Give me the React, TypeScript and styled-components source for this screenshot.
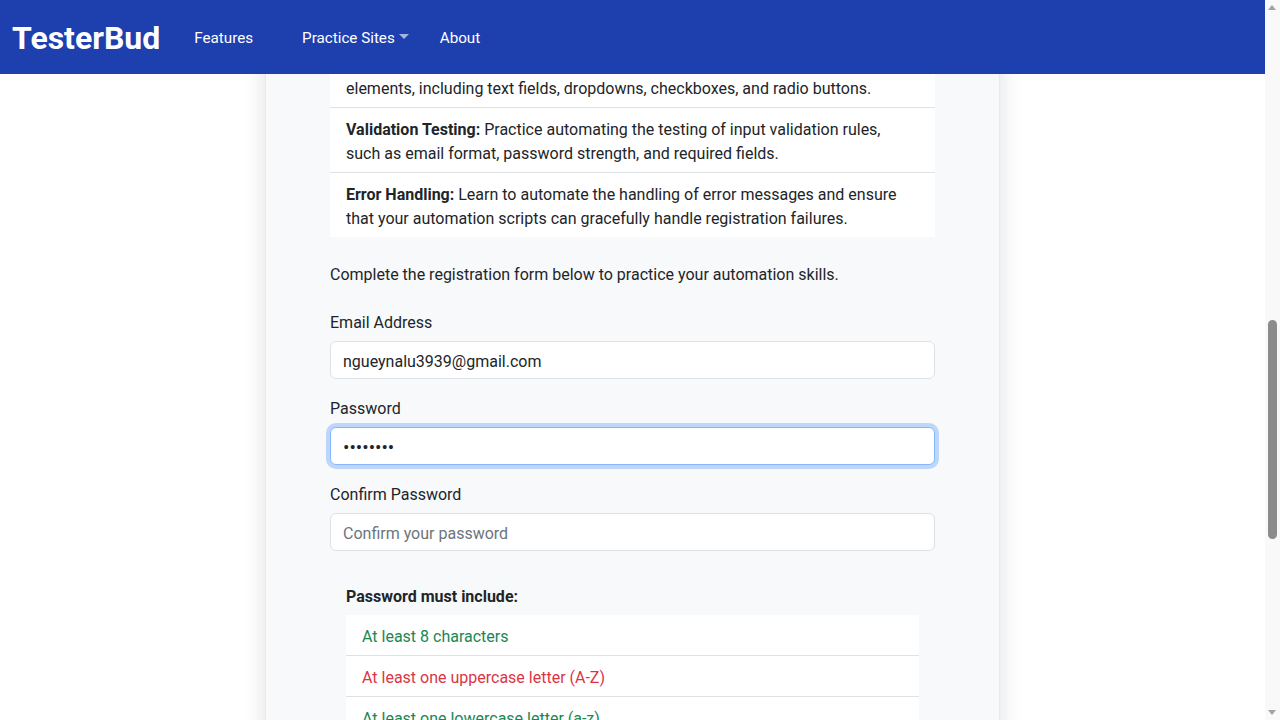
import React, { useLayoutEffect, useRef, useState } from "react";
import styled, { createGlobalStyle } from "styled-components";

const GlobalStyle = createGlobalStyle`
  *, *::before, *::after { box-sizing: border-box; }
  html { scroll-behavior: auto; }
  body {
    margin: 0;
    font-family: "Segoe UI", Roboto, "Liberation Sans", sans-serif;
    font-size: 16px;
    line-height: 1.5;
    color: #212529;
    background: #fff;
  }
`;

const Navbar = styled.nav`
  position: fixed;
  top: 0;
  left: 0;
  right: 15px;
  z-index: 10;
  height: 74px;
  background: #1e40af;
  display: flex;
  align-items: center;
  padding: 3px 12px 0;
`;

const Brand = styled.a`
  color: #fff;
  font-size: 32px;
  font-weight: 700;
  line-height: 1;
  text-decoration: none;
  margin-right: 26px;
  padding-bottom: 1px;
`;

const NavList = styled.ul`
  display: flex;
  list-style: none;
  margin: 0;
  padding: 0;
`;

const NavItem = styled.li<{ $space?: number }>`
  margin-right: ${(p) => p.$space ?? 0}px;
`;

const NavLink = styled.a<{ $dropdown?: boolean }>`
  display: flex;
  align-items: center;
  padding: 8px;
  color: #fff;
  font-size: 15.2px;
  text-decoration: none;

  ${(p) =>
    p.$dropdown &&
    `
    &::after {
      content: "";
      margin-left: 4px;
      margin-bottom: 3px;
      border-top: 5px solid rgba(255, 255, 255, 0.6);
      border-left: 5px solid transparent;
      border-right: 5px solid transparent;
    }
  `}
`;

/* stand-in for the desktop browser's classic scrollbar seen in the reference */
const ScrollTrack = styled.div`
  position: fixed;
  top: 0;
  right: 0;
  bottom: 0;
  width: 15px;
  z-index: 20;
  background: #f9f9f9;
`;

const ScrollArrow = styled.span<{ $down?: boolean }>`
  position: absolute;
  left: 3px;
  ${(p) => (p.$down ? "bottom: 5px;" : "top: 5px;")}
  width: 0;
  height: 0;
  border-left: 4.5px solid transparent;
  border-right: 4.5px solid transparent;
  ${(p) =>
    p.$down ? "border-top: 5px solid #a3a3a3;" : "border-bottom: 5px solid #a3a3a3;"}
`;

const ScrollThumb = styled.span`
  position: absolute;
  left: 3px;
  width: 9px;
  border-radius: 5px;
  background: #8c8c8c;
`;

const Page = styled.div`
  min-height: 2268px;
  margin-right: 15px;
  padding-top: 74px;
  display: flex;
  flex-direction: column;
`;

const Main = styled.main`
  padding: 88px 0 48px;
`;

const Card = styled.section`
  width: 735px;
  margin: 0 auto;
  padding: 48px 64px;
  background: #f8f9fa;
  border: 1px solid rgba(0, 0, 0, 0.06);
  box-shadow: 0 0 22px rgba(0, 0, 0, 0.12);
`;

const Title = styled.h1`
  font-size: 40px;
  font-weight: 600;
  line-height: 1.2;
  margin: 0 0 8px;
`;

const Lead = styled.p`
  font-size: 20px;
  font-weight: 300;
  margin: 0 0 24px;
`;

const SectionTitle = styled.h3`
  font-size: 28px;
  font-weight: 600;
  line-height: 1.2;
  margin: 0 0 8px;
`;

const Paragraph = styled.p<{ $space?: number }>`
  padding-top: 2px;
  margin: 0 0 ${(p) => (p.$space ?? 16) - 2}px;
`;

const ListGroup = styled.ul`
  list-style: none;
  margin: 0 0 24px;
  padding: 0;
  background: #fff;
`;

const ListItem = styled.li<{ $tone?: "success" | "danger" }>`
  padding: 10px 18px 6px 16px;
  background: #fff;
  border-bottom: 1px solid #dee2e6;
  color: ${(p) =>
    p.$tone === "success" ? "#198754" : p.$tone === "danger" ? "#dc3545" : "#212529"};

  &:last-child {
    border-bottom: none;
  }

  b {
    font-weight: 700;
  }
`;

const FormGroup = styled.div`
  margin-bottom: 16px;
`;

const Label = styled.label`
  display: block;
  padding-top: 2px;
  margin-bottom: 6px;
`;

const Input = styled.input<{ $focused?: boolean; $masked?: boolean }>`
  display: block;
  width: 100%;
  height: 38px;
  padding: 7px 12px 5px;
  font: inherit;
  font-size: ${(p) => (p.$masked ? "19px" : "16px")};
  line-height: 24px;
  color: #212529;
  background: #fff;
  border: 1px solid ${(p) => (p.$focused ? "#86b7fe" : "#dee2e6")};
  border-radius: 6px;
  outline: none;
  box-shadow: ${(p) => (p.$focused ? "0 0 0 4px rgba(13, 110, 253, 0.25)" : "none")};

  &::placeholder {
    color: #6c757d;
  }
`;

const Requirements = styled.div`
  padding: 16px;
  margin-bottom: 16px;
`;

const RequirementsTitle = styled.h6`
  font-size: 16px;
  font-weight: 700;
  line-height: 1.5;
  padding-top: 2px;
  margin: 0 0 6px;
`;

const SubmitButton = styled.button`
  display: block;
  width: 100%;
  padding: 10px 16px;
  font: inherit;
  color: #fff;
  background: #1e40af;
  border: none;
  border-radius: 6px;
  margin-bottom: 16px;
`;

const LoginNote = styled.p`
  margin: 0;
  text-align: center;

  a {
    color: #1e40af;
  }
`;

const Footer = styled.footer`
  margin-top: auto;
  background: #1e40af;
  color: #fff;
  text-align: center;
  padding: 24px 0;
`;

const features = [
  {
    title: "Form Interaction:",
    text: "Practice automating the interaction with various form elements, including text fields, dropdowns, checkboxes, and radio buttons.",
  },
  {
    title: "Validation Testing:",
    text: "Practice automating the testing of input validation rules, such as email format, password strength, and required fields.",
  },
  {
    title: "Error Handling:",
    text: "Learn to automate the handling of error messages and ensure that your automation scripts can gracefully handle registration failures.",
  },
];

const rules: { label: string; ok: boolean }[] = [
  { label: "At least 8 characters", ok: true },
  { label: "At least one uppercase letter (A-Z)", ok: false },
  { label: "At least one lowercase letter (a-z)", ok: true },
  { label: "At least one number (0-9)", ok: true },
  { label: "At least one special character (!@#$%^&*)", ok: false },
];

const App = () => {
  const anchorRef = useRef<HTMLLIElement>(null);
  const [thumb, setThumb] = useState({ top: 15, height: 0 });

  // the reference shows the page scrolled down to the form
  useLayoutEffect(() => {
    const el = anchorRef.current;
    if (!el) return;
    const top = el.getBoundingClientRect().top + window.scrollY;
    window.scrollTo(0, top - 108);

    const view = window.innerHeight;
    const doc = document.documentElement.scrollHeight;
    const track = view - 30;
    const height = Math.max(20, (track * view) / doc);
    const range = Math.max(1, doc - view);
    setThumb({ top: 15 + ((track - height) * window.scrollY) / range, height });
  }, []);

  return (
    <>
      <GlobalStyle />
      <Navbar>
        <Brand href="#">TesterBud</Brand>
        <NavList>
          <NavItem $space={33}>
            <NavLink href="#">Features</NavLink>
          </NavItem>
          <NavItem $space={15}>
            <NavLink href="#" $dropdown>
              Practice Sites
            </NavLink>
          </NavItem>
          <NavItem>
            <NavLink href="#">About</NavLink>
          </NavItem>
        </NavList>
      </Navbar>

      <ScrollTrack>
        <ScrollArrow />
        <ScrollThumb style={{ top: thumb.top, height: thumb.height }} />
        <ScrollArrow $down />
      </ScrollTrack>

      <Page>
        <Main>
          <Card>
            <Title>Registration Form Automation Practice</Title>
            <Lead>
              Welcome to the registration practice page. Use this form to sharpen
              your test automation skills on a realistic sign-up flow.
            </Lead>

            <SectionTitle>About This Practice Page</SectionTitle>
            <Paragraph>
              Registration forms are one of the most common features of any web
              application. They combine many different input types, client-side
              validation and server responses, which makes them an ideal target
              for learning automation with tools like Selenium, Cypress or
              Playwright.
            </Paragraph>
            <Paragraph $space={24}>
              Every field on this page has stable identifiers so that you can
              focus on writing clean locators, reusable page objects and
              meaningful assertions.
            </Paragraph>

            <SectionTitle>Why Practice Registration Forms?</SectionTitle>
            <Paragraph>
              Automating a sign-up flow teaches you how to enter data, wait for
              dynamic feedback, verify validation messages and confirm that a
              user account was created successfully. These are skills you will
              use in nearly every real project.
            </Paragraph>
            <Paragraph $space={24}>
              Try both positive and negative scenarios: valid data, missing
              fields, mismatched passwords and weak passwords.
            </Paragraph>

            <SectionTitle>How to Use This Page</SectionTitle>
            <Paragraph $space={24}>
              Open the page in your automation tool, locate each field by its
              label or id, fill in the values and check how the password rules
              update as you type. Then submit the form and verify the result
              message that appears below the Register button.
            </Paragraph>

            <SectionTitle>What You Will Practice</SectionTitle>
            <Paragraph>
              The registration form covers the following automation scenarios:
            </Paragraph>
            <ListGroup>
              {features.map((f, i) => (
                <ListItem key={f.title} ref={i === 1 ? anchorRef : undefined}>
                  <b>{f.title}</b> {f.text}
                </ListItem>
              ))}
            </ListGroup>

            <Paragraph $space={24}>
              Complete the registration form below to practice your automation
              skills.
            </Paragraph>

            <form onSubmit={(e) => e.preventDefault()}>
              <FormGroup>
                <Label htmlFor="email">Email Address</Label>
                <Input
                  id="email"
                  type="email"
                  defaultValue="ngueynalu3939@gmail.com"
                  placeholder="Enter your email"
                />
              </FormGroup>
              <FormGroup>
                <Label htmlFor="password">Password</Label>
                <Input
                  id="password"
                  type="password"
                  defaultValue="testpass"
                  placeholder="Enter your password"
                  $focused
                  $masked
                />
              </FormGroup>
              <FormGroup>
                <Label htmlFor="confirm">Confirm Password</Label>
                <Input
                  id="confirm"
                  type="password"
                  placeholder="Confirm your password"
                />
              </FormGroup>

              <Requirements>
                <RequirementsTitle>Password must include:</RequirementsTitle>
                <ListGroup>
                  {rules.map((r) => (
                    <ListItem key={r.label} $tone={r.ok ? "success" : "danger"}>
                      {r.label}
                    </ListItem>
                  ))}
                </ListGroup>
              </Requirements>

              <SubmitButton type="submit">Register</SubmitButton>
              <LoginNote>
                Already have an account? <a href="#">Login here</a>
              </LoginNote>
            </form>
          </Card>
        </Main>
        <Footer>© 2024 TesterBud. All rights reserved.</Footer>
      </Page>
    </>
  );
};

export default App;
